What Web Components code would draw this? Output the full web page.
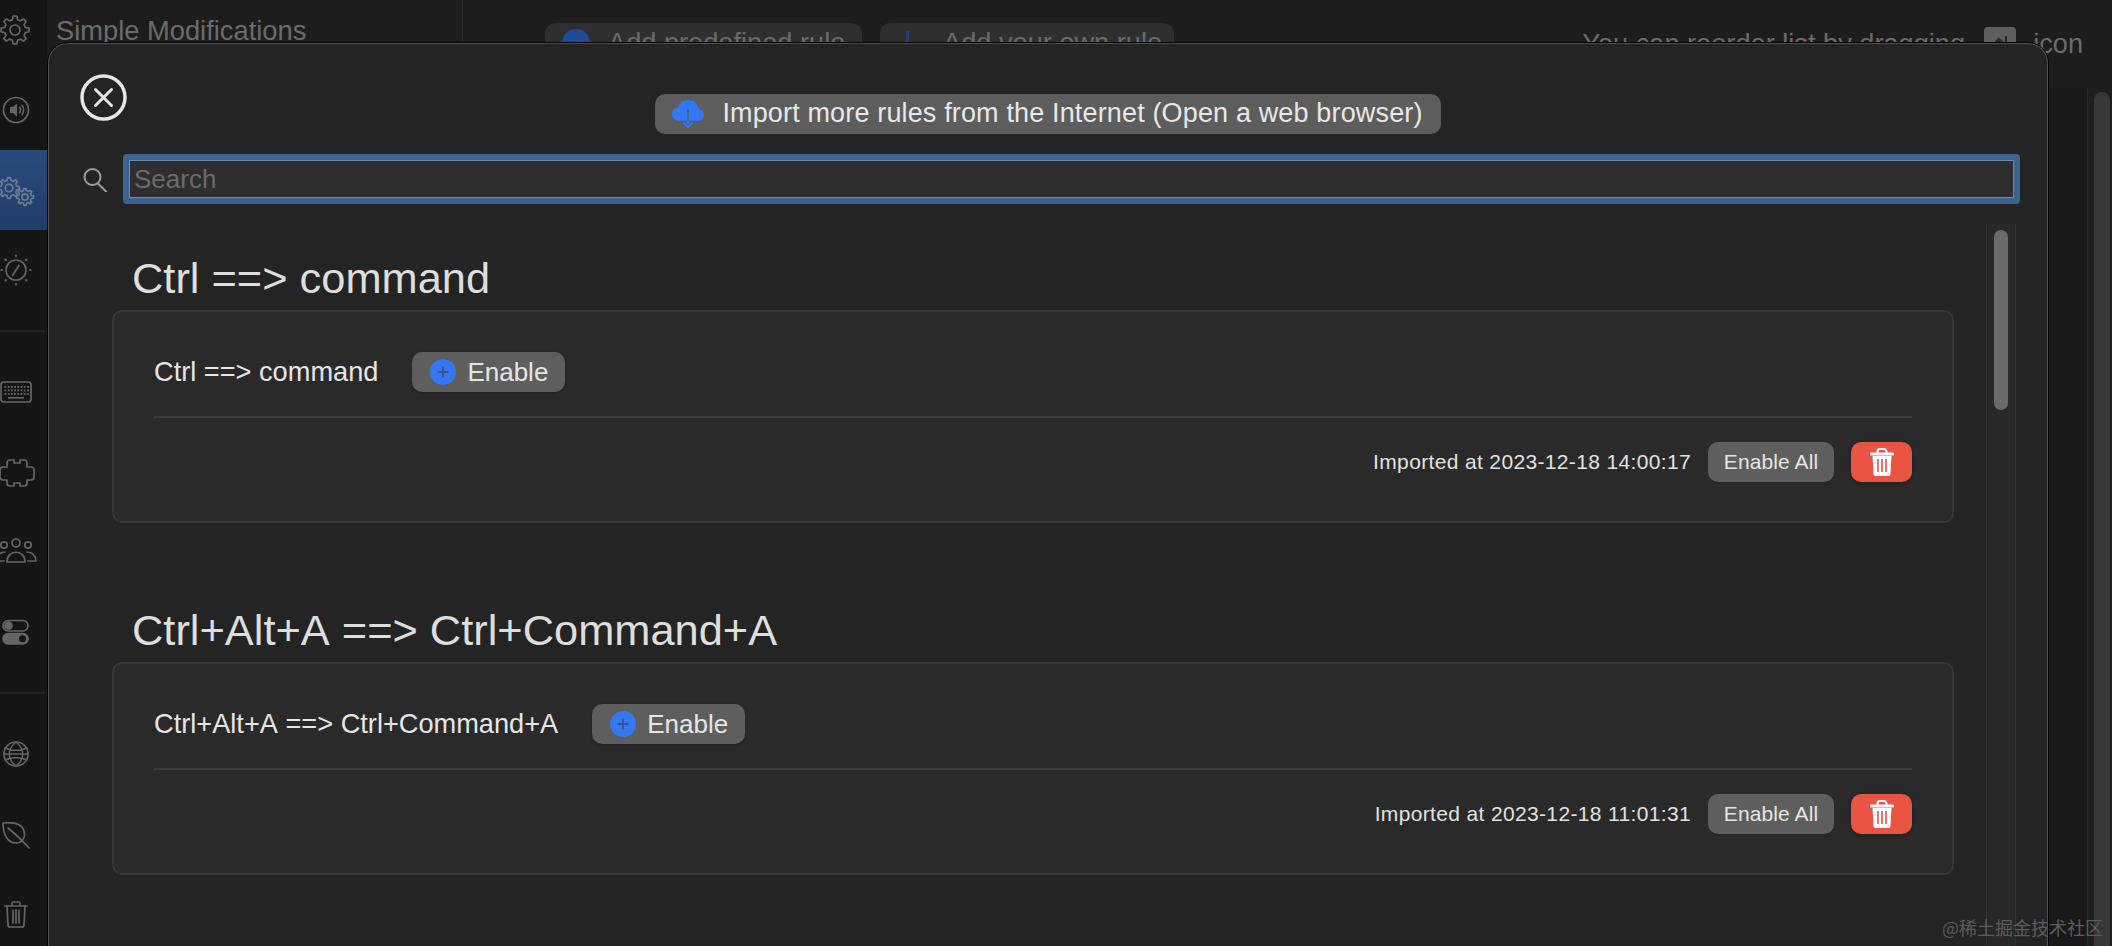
<!DOCTYPE html>
<html lang="en">
<head>
<meta charset="UTF-8">
<title>Simple Modifications</title>
<style>
  html, body { margin: 0; height: 100%; overflow: hidden; background: #1b1b1b; }
  body { font-family: "Liberation Sans", Arial, sans-serif; }
</style>
</head>
<body>
<km-app>
  <km-dialog>
    <rule-group heading="Ctrl ==> command" rule="Ctrl ==> command" imported="Imported at 2023-12-18 14:00:17"></rule-group>
    <rule-group heading="Ctrl+Alt+A ==> Ctrl+Command+A" rule="Ctrl+Alt+A ==> Ctrl+Command+A" imported="Imported at 2023-12-18 11:01:31"></rule-group>
  </km-dialog>
</km-app>

<script>
// cog outline around (cx, cy)
function cog(cx, cy, r, teeth) {
  const pts = [];
  const step = Math.PI * 2 / teeth;
  for (let i = 0; i < teeth; i++) {
    const a = i * step - Math.PI / 2;
    const at = (rad, off) => `${(cx + rad * Math.cos(a + off)).toFixed(1)} ${(cy + rad * Math.sin(a + off)).toFixed(1)}`;
    pts.push(at(r, -step * 0.16), at(r, step * 0.16), at(r * 0.76, step * 0.3), at(r * 0.76, step * 0.7));
  }
  return `<path d="M${pts.join("L")}Z"/><circle cx="${cx}" cy="${cy}" r="${(r * 0.36).toFixed(1)}"/>`;
}

function dots(rows) {
  let out = "";
  rows.forEach(([y, x0, n]) => {
    for (let i = 0; i < n; i++) out += `<rect x="${x0 + i * 3.2}" y="${y}" width="1.8" height="1.8" stroke="none" fill="currentColor"/>`;
  });
  return out;
}

const SIDE_ICONS = {
  gear: cog(19, 20, 14, 8),
  speaker: `<circle cx="20" cy="20" r="12.5"/><path d="M14 17h3l4-3.5v13L17 23h-3z" fill="currentColor" stroke="none"/><path d="M23.5 17c1.2 1.8 1.2 4.2 0 6M26 15c2 3 2 7 0 10" stroke-width="1.4"/>`,
  gears: cog(13, 18, 10.5, 8) + cog(29, 27, 8.5, 8),
  gauge: `<circle cx="20" cy="20" r="10"/><path d="M16.500 25.500l6.500-10"/><path d="M20 5.500v.5M20 34v.5M5.500 20h.5M34 20h.5M9.500 9.500l.4.4M30 30l.4.4M9.500 30.500l.4-.4M30 10l.4-.4" stroke-width="2.200"/>`,
  keyboard: `<rect x="5" y="10" width="30" height="20" rx="2.5"/>` + dots([[14, 8.5, 8], [17.5, 8.5, 8], [21, 8.5, 8]]) + `<rect x="12" y="25" width="16" height="1.6" stroke="none" fill="currentColor"/>`,
  puzzle: `<path d="M11 15V11a3 3 0 0 1 3-3h4v3h6v-3h4a3 3 0 0 1 3 3v4h4a3 3 0 0 1 3 3v7a3 3 0 0 1-3 3h-4v3a3 3 0 0 1-3 3h-4v-3h-6v3h-4a3 3 0 0 1-3-3v-3h-4a3 3 0 0 1-3-3v-7a3 3 0 0 1 3-3z"/>`,
  people: `<circle cx="20" cy="11" r="4"/><path d="M11 30c0-13 18-13 18 0z"/><circle cx="32" cy="13" r="3.200"/><path d="M31 20c5 0 9 4 9 9h-8"/><circle cx="8" cy="13" r="3.200"/><path d="M9 20c-5 0-9 4-9 9h8"/>`,
  toggle: `<rect x="7" y="8.500" width="25" height="10.500" rx="5.200"/><circle cx="12.500" cy="13.700" r="3.500" fill="currentColor"/><rect x="7" y="21.500" width="25" height="10.500" rx="5.200" fill="currentColor"/><circle cx="26.500" cy="26.700" r="3.500" fill="#151515" stroke="none"/>`,
  globe: `<circle cx="20" cy="20" r="12"/><path d="M9 14c7 3 15 3 22 0M9 26c7-3 15-3 22 0M20 8c-9 7-9 17 0 24M20 8c9 7 9 17 0 24M8 20h24" stroke-width="1.500"/>`,
  leaf: `<path d="M7 9c10-1 19 1 21 8 2 8-3 12-8 12-8 0-13-8-13-20z"/><path d="M12 14c6 5 14 12 21 20"/>`,
  trash: `<path d="M9 12h22M16 12V9a1 1 0 0 1 1-1h6a1 1 0 0 1 1 1v3M11 12l1 19a2 2 0 0 0 2 2h12a2 2 0 0 0 2-2l1-19M17 16v13M20 16v13M23 16v13"/>`
};

const BLUE_PLUS = `<svg width="26" height="26" viewBox="0 0 26 26"><circle cx="13" cy="13" r="13" fill="#3478f6"/><path d="M13 7.500v11M7.500 13h11" stroke="#3c5680" stroke-width="1.800"/></svg>`;

class KmApp extends HTMLElement {
  constructor() {
    super();
    this.attachShadow({ mode: "open" });
    const side = (name, extra = "") =>
      `<div class="item ${extra}"><svg viewBox="0 0 40 40" fill="none" stroke="currentColor" stroke-width="1.700" stroke-linejoin="round" stroke-linecap="round">${SIDE_ICONS[name]}</svg></div>`;
    this.shadowRoot.innerHTML = `
      <style>
        :host { display: flex; width: 2112px; height: 946px; overflow: hidden; position: relative; color: #6b6b6b; }
        #sidebar { width: 47px; flex: none; background: #151515; display: flex; flex-direction: column; overflow: hidden; }
        .group { display: flex; flex-direction: column; flex: none; }
        .group:first-child { margin-top: -10px; }
        .item { height: 80px; flex: none; display: flex; align-items: center; color: #656565; }
        .item svg { width: 40px; height: 40px; margin-left: -4px; flex: none; overflow: visible; }
        .item.active { background: linear-gradient(180deg, #284b7e, #213d69); color: #6b7b93; }
        .sep { height: 42px; flex: none; display: flex; align-items: center; }
        .sep::before { content: ""; flex: 1; height: 2px; background: #222; }
        #main { flex: 1; display: flex; flex-direction: column; min-width: 0; }
        #header { height: 88px; flex: none; display: flex; align-items: flex-start; background: #1d1d1d; }
        #title { width: 416px; height: 88px; box-sizing: border-box; border-right: 1px solid #2a2a2a; padding: 15px 0 0 9px; font-size: 27.3px; line-height: 32px; flex: none; }
        #tools { flex: 1; display: flex; align-items: center; padding: 22px 29px 0 82px; font-size: 27.2px; line-height: 40px; }
        .btn { height: 40px; background: #2f2f2f; border-radius: 10px; display: flex; align-items: center; box-sizing: border-box; flex: none; }
        .btn + .btn { margin-left: 18px; }
        #predef { width: 317px; padding-left: 17px; }
        #predef svg { margin-right: 18px; }
        #own { width: 294px; padding-left: 20px; }
        #own svg { margin-right: 28px; }
        #hint { margin-left: auto; margin-top: 2px; }
        #key { width: 32px; height: 32px; margin: 0 17px 0 19px; background: #5e5e5e; border-radius: 4px; flex: none; display: flex; align-items: center; justify-content: center; }
        #word { margin-top: 2px; }
        #body { flex: 1; display: flex; justify-content: flex-end; background: #191919; }
        #track { width: 25px; box-sizing: border-box; border-left: 1px solid #2a2a2a; background: #1e1e1e; padding: 4px 2px 0 6px; }
        #thumb { height: 100%; background: #383838; border-radius: 8px 8px 0 0; }
        #mark { position: absolute; right: 9px; bottom: 8px; color: #5c5c5c; font: 18px/22px "Noto Sans CJK SC", "Liberation Sans", sans-serif; }
      </style>
      <nav id="sidebar">
        <div class="group">${side("gear")}${side("speaker")}${side("gears", "active")}${side("gauge")}</div>
        <div class="sep"></div>
        <div class="group">${side("keyboard")}${side("puzzle")}${side("people")}${side("toggle")}</div>
        <div class="sep"></div>
        <div class="group">${side("globe")}${side("leaf")}${side("trash")}</div>
      </nav>
      <div id="main">
        <div id="header">
          <div id="title">Simple Modifications</div>
          <div id="tools">
            <div class="btn" id="predef"><svg width="28" height="28" viewBox="0 0 28 28"><circle cx="14" cy="14" r="14" fill="#1f4a94"/></svg><span>Add predefined rule</span></div>
            <div class="btn" id="own"><svg width="15" height="28" viewBox="0 0 15 28"><path d="M7.500 2v24" stroke="#23407c" stroke-width="3"/></svg><span>Add your own rule</span></div>
            <span id="hint">You can reorder list by dragging</span>
            <span id="key"><svg width="20" height="20" viewBox="0 0 20 20" fill="none" stroke="#262626" stroke-width="2"><path d="M9 18V6M4 11l5-5 5 5M16 3v15"/></svg></span>
            <span id="word">icon</span>
          </div>
        </div>
        <div id="body"><div id="track"><div id="thumb"></div></div></div>
      </div>
      <slot></slot>
      <div id="mark">@稀土掘金技术社区</div>
    `;
  }
}

class KmDialog extends HTMLElement {
  constructor() {
    super();
    this.attachShadow({ mode: "open" });
    this.shadowRoot.innerHTML = `
      <style>
        :host {
          position: absolute; left: 48px; top: 43px; width: 2000px; height: 903px;
          box-sizing: border-box; display: flex; flex-direction: column;
          background: #242424; border: 1px solid #4e4e4e; border-bottom: none;
          border-radius: 20px 20px 0 0; box-shadow: 0 0 0 1px #000; color: #e4e4e4; overflow: hidden;
        }
        #top { display: grid; grid-template-columns: 1fr auto 1fr; align-items: start; flex: none; }
        #close { margin: 30px 0 0 31px; width: 47px; height: 47px; display: block; }
        #import {
          margin-top: 50px; height: 40px; box-sizing: border-box; display: flex; align-items: center;
          padding: 0 18px 0 17px; gap: 17px; background: #5d5d5d; border-radius: 10px;
          font-size: 27px; line-height: 38px; letter-spacing: .15px; color: #e8e8e8; white-space: nowrap;
        }
        #import span { height: 38px; margin-top: -2px; }
        #searchrow { display: flex; align-items: center; gap: 15px; margin-top: 20px; padding: 0 27px 0 34px; flex: none; }
        #field {
          flex: 1; height: 50px; box-sizing: border-box; background: #2e2e2e;
          border: 6px solid #3d6594; border-radius: 4px; box-shadow: inset 0 0 0 1px #6d8bab;
          font-size: 26px; line-height: 38px; color: #6a6a6a; padding-left: 5px;
        }
        #content { flex: 1; min-height: 0; display: flex; margin-top: 20px; padding-left: 63px; }
        #list { flex: 1; min-width: 0; padding-top: 30px; overflow: hidden; }
        #bar {
          width: 30px; box-sizing: border-box; margin: 0 31px 0 32px; flex: none; padding: 6px 7px 0;
          background: #282828; border-left: 1px solid #363636; border-right: 1px solid #363636;
        }
        #barthumb { height: 180px; background: #6b6b6b; border-radius: 8px; }
      </style>
      <div id="top">
        <svg id="close" viewBox="0 0 47 47" fill="none" stroke="#e6e6e6">
          <circle cx="23.500" cy="23.500" r="21.500" stroke-width="3.500"/>
          <path d="M15.500 15.500l16 16M31.500 15.500l-16 16" stroke-width="3" stroke-linecap="round"/>
        </svg>
        <div id="import">
          <svg width="33" height="28" viewBox="0 0 33 28">
            <path d="M8 21C3.500 21 0 18 0 14c0-3.500 2.500-6 6-6.500C7.500 3 11.500 0 16 0c5.500 0 9.500 3.500 10.500 8.500C30 9.500 32 12 32 15c0 3.500-3 6-6.500 6z" fill="#3478f6"/>
            <path d="M16 9v16" stroke="#4b5f80" stroke-width="1.600"/>
            <path d="M16 21v6M11.500 22.500L16 27l4.500-4.500" stroke="#3478f6" stroke-width="1.800" fill="none"/>
          </svg>
          <span>Import more rules from the Internet (Open a web browser)</span>
        </div>
        <span></span>
      </div>
      <div id="searchrow">
        <svg width="25" height="25" viewBox="0 0 25 25" fill="none" stroke="#9c9c9c" stroke-width="2">
          <circle cx="9.500" cy="10" r="8"/><path d="M15 16.500l8 8" stroke-linecap="round"/>
        </svg>
        <div id="field">Search</div>
      </div>
      <div id="content">
        <div id="list"><slot></slot></div>
        <div id="bar"><div id="barthumb"></div></div>
      </div>
    `;
  }
}

class RuleGroup extends HTMLElement {
  constructor() {
    super();
    this.attachShadow({ mode: "open" });
    this.shadowRoot.innerHTML = `
      <style>
        :host { display: block; margin-bottom: 83px; color: #e4e4e4; }
        h2 { margin: 0 0 8px 20px; font-size: 43.400px; line-height: 48px; font-weight: 400; color: #dedede; font-kerning: none; }
        #card { box-sizing: border-box; height: 213px; background: #2a2a2a; border: 2px solid #373737; border-radius: 10px; padding: 40px 40px 39px; }
        #rule { display: flex; align-items: center; gap: 34px; height: 40px; font-size: 27.200px; color: #e6e6e6; font-kerning: none; }
        #enable {
          height: 40px; box-sizing: border-box; display: flex; align-items: center; gap: 11px;
          padding: 0 17px 0 18px; background: #5e5e5e; border-radius: 10px; font-size: 26px;
          box-shadow: 0 1px 3px rgba(0,0,0,.3);
        }
        #enable svg { flex: none; }
        hr { margin: 24px 0; height: 2px; border: none; background: #3c3c3c; }
        #foot { display: flex; justify-content: flex-end; align-items: center; gap: 17px; height: 40px; font-size: 21px; }
        #stamp { letter-spacing: .35px; color: #e2e2e2; }
        #all { height: 40px; width: 126px; box-sizing: border-box; display: flex; align-items: center; justify-content: center; background: #5e5e5e; border-radius: 10px; color: #e6e6e6; letter-spacing: .1px; }
        #del { height: 40px; width: 61px; display: flex; align-items: center; justify-content: center; background: #e95444; border-radius: 10px; box-shadow: 0 1px 4px rgba(0,0,0,.3); }
      </style>
      <h2></h2>
      <div id="card">
        <div id="rule">
          <span id="name"></span>
          <div id="enable">${BLUE_PLUS}<span>Enable</span></div>
        </div>
        <hr>
        <div id="foot">
          <span id="stamp"></span>
          <div id="all">Enable All</div>
          <div id="del">
            <svg width="24" height="28" viewBox="0 0 24 28">
              <path d="M7.500 5V3.500A2.500 2.500 0 0 1 10 1h4a2.500 2.500 0 0 1 2.500 2.500V5" fill="none" stroke="#fff" stroke-width="2"/>
              <rect x="0" y="4.500" width="24" height="3" rx="1.200" fill="#fff"/>
              <path d="M2.500 8h19l-1 17.500A2.500 2.500 0 0 1 18 28H6a2.500 2.500 0 0 1-2.500-2.500z" fill="#fff"/>
              <path d="M8 11v13M12 11v13M16 11v13" stroke="#e95444" stroke-width="1.600"/>
            </svg>
          </div>
        </div>
      </div>
    `;
  }

  connectedCallback() {
    const root = this.shadowRoot;
    root.querySelector("h2").textContent = this.getAttribute("heading");
    root.getElementById("name").textContent = this.getAttribute("rule");
    root.getElementById("stamp").textContent = this.getAttribute("imported");
  }
}

customElements.define("km-app", KmApp);
customElements.define("km-dialog", KmDialog);
customElements.define("rule-group", RuleGroup);
</script>
</body>
</html>
